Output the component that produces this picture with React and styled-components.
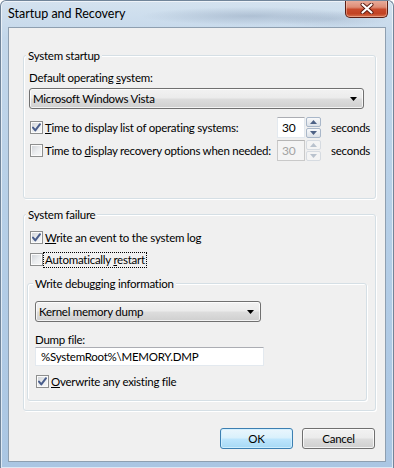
import React from "react";
import styled, { createGlobalStyle } from "styled-components";

const GlobalStyle = createGlobalStyle`
  * { box-sizing: border-box; }
  html, body { margin: 0; padding: 0; background: #fff; }
  body {
    font-family: Lato, "Liberation Sans", sans-serif;
    font-size: 11.5px;
    letter-spacing: -0.25px;
    color: #000;
  }
  #root { width: 394px; height: 468px; }
`;

const CheckMark = () => (
  <svg width="11" height="11" viewBox="0 0 11 11">
    <path d="M2 5.6 L4.3 8.4 L9 2.2" fill="none" stroke="#4a5e8c" strokeWidth="2" strokeLinecap="round" strokeLinejoin="round" />
  </svg>
);

const Arrow = () => (
  <svg width="7" height="4" viewBox="0 0 7 4">
    <path d="M0 0 H7 L3.5 4 Z" fill="#000" />
  </svg>
);

const SpinArrow = ({ up, disabled }) => (
  <svg width="7" height="4" viewBox="0 0 7 4">
    <path d={up ? "M0 4 H7 L3.5 0 Z" : "M0 0 H7 L3.5 4 Z"} fill={disabled ? "#b9c2cd" : "#4d6185"} />
  </svg>
);

const CloseGlyph = () => (
  <svg width="14" height="11" viewBox="0 0 14 11">
    <path d="M2.5 1.5 L11.5 9.5 M11.5 1.5 L2.5 9.5" stroke="#5a1a10" strokeWidth="4" strokeLinecap="round" />
    <path d="M2.5 1.5 L11.5 9.5 M11.5 1.5 L2.5 9.5" stroke="#fff" strokeWidth="2.2" strokeLinecap="round" />
  </svg>
);

const Checkbox = ({ checked, children }) => (
  <CheckRow>
    <Box>{checked && <CheckMark />}</Box>
    <CheckText>{children}</CheckText>
  </CheckRow>
);

const Spinner = ({ value, disabled }) => (
  <SpinWrap>
    <SpinField disabled={disabled}>{value}</SpinField>
    <SpinButtons>
      <SpinButton disabled={disabled}>
        <SpinArrow up disabled={disabled} />
      </SpinButton>
      <SpinButton disabled={disabled}>
        <SpinArrow disabled={disabled} />
      </SpinButton>
    </SpinButtons>
  </SpinWrap>
);

const App = () => {
  return (
    <>
      <GlobalStyle />
      <Window>
        <TitleBar>
          <Title>Startup and Recovery</Title>
          <CloseButton>
            <CloseGlyph />
          </CloseButton>
        </TitleBar>
        <Client>
          <Group pb={37}>
            <Legend>System startup</Legend>
            <Label>
              Default operating <Key>s</Key>ystem:
            </Label>
            <Combo width={335} mt={3}>
              <span>Microsoft Windows Vista</span>
              <Arrow />
            </Combo>
            <TimeRow mt={8}>
              <Checkbox checked>
                <Key>T</Key>ime to display list of operating systems:
              </Checkbox>
              <Spinner value="30" />
              <Unit>seconds</Unit>
            </TimeRow>
            <TimeRow mt={2}>
              <Checkbox>
                Time to <Key>d</Key>isplay recovery options when needed:
              </Checkbox>
              <Spinner value="30" disabled />
              <Unit>seconds</Unit>
            </TimeRow>
          </Group>

          <Group pb={9} mt={8} pt={6}>
            <Legend>System failure</Legend>
            <Checkbox checked>
              <Key>W</Key>rite an event to the system log
            </Checkbox>
            <Spacer h={4} />
            <Checkbox>
              <FocusText>
                Automatically <Key>r</Key>estart
              </FocusText>
            </Checkbox>
            <InnerGroup>
              <Legend inner>Write debugging information</Legend>
              <Combo width={226}>
                <span>Kernel memory dump</span>
                <Arrow />
              </Combo>
              <SmallLabel>Dump file:</SmallLabel>
              <TextInput>%SystemRoot%\MEMORY.DMP</TextInput>
              <Spacer h={6} />
              <Checkbox checked>
                <Key>O</Key>verwrite any existing file
              </Checkbox>
            </InnerGroup>
          </Group>

          <ButtonRow>
            <Button primary>OK</Button>
            <Button>Cancel</Button>
          </ButtonRow>
        </Client>
      </Window>
    </>
  );
};

export default App;

const Window = styled.div`
  width: 394px;
  height: 468px;
  display: flex;
  flex-direction: column;
  border: 1px solid #71859a;
  border-bottom: none;
  border-radius: 6px 6px 0 0;
  overflow: hidden;
  background: linear-gradient(180deg, #d4e2ef 0%, #c3d7ea 8%, #b6cfe7 45%, #aac6e3 100%);
  box-shadow: inset 0 0 0 1px rgba(255, 255, 255, 0.6);
`;

const TitleBar = styled.div`
  height: 26px;
  flex: none;
  display: flex;
  align-items: flex-start;
  padding-left: 7px;
  background:
    radial-gradient(ellipse 110px 9px at 250px 15px, rgba(95, 115, 145, 0.28), transparent),
    radial-gradient(ellipse 60px 8px at 330px 18px, rgba(95, 115, 145, 0.18), transparent);
`;

const Title = styled.div`
  margin-top: 5px;
  line-height: 16px;
  font-size: 12.5px;
  letter-spacing: 0;
  color: #000;
`;

const CloseButton = styled.button`
  margin: -1px 5px 0 auto;
  width: 43px;
  height: 18px;
  padding: 0;
  border: 1px solid #5b1e14;
  border-top: none;
  border-radius: 0 0 5px 5px;
  display: flex;
  align-items: center;
  justify-content: center;
  background: linear-gradient(180deg, #e9b0a0 0%, #de8d76 42%, #c84a2c 55%, #c24323 80%, #d6714f 100%);
  box-shadow: inset 0 0 0 1px rgba(255, 215, 195, 0.45);
`;

const Client = styled.div`
  flex: 1;
  margin: 0 7px 6px;
  border: 1px solid #8e9fb0;
  background: #f0f0f0;
  padding: 20px 9px 12px 14px;
  display: flex;
  flex-direction: column;
`;

const Group = styled.fieldset`
  margin: ${(p) => p.mt || 0}px 0 0;
  padding: ${(p) => (p.pt != null ? p.pt : 7)}px 5px ${(p) => p.pb}px;
  min-width: 0;
  border: 1px solid #d5dfe5;
  border-radius: 3px;
  box-shadow: inset 1px 1px 0 #fff, 1px 1px 0 #fff;
  display: flex;
  flex-direction: column;
  align-items: flex-start;
`;

const InnerGroup = styled(Group)`
  margin: 8px 0 0 -2px;
  width: 340px;
  padding: 10px 7px 10px;
`;

const Legend = styled.legend`
  padding: 0 2px;
  margin-left: ${(p) => (p.inner ? -2 : -3)}px;
  line-height: 15px;
  background: #f0f0f0;
`;

const Label = styled.div`
  line-height: 15px;
`;

const SmallLabel = styled.div`
  margin-top: 11px;
  line-height: 14px;
`;

const Key = styled.span`
  text-decoration: underline;
  text-underline-offset: 1px;
`;

const Combo = styled.div`
  width: ${(p) => p.width}px;
  height: 21px;
  margin-top: ${(p) => p.mt || 0}px;
  border: 1px solid #707070;
  border-radius: 3px;
  display: flex;
  align-items: center;
  justify-content: space-between;
  padding: 0 6px 0 3px;
  line-height: 15px;
  background: linear-gradient(180deg, #f2f2f2 0%, #ebebeb 48%, #dddddd 52%, #cfcfcf 100%);
  box-shadow: inset 0 0 0 1px rgba(255, 255, 255, 0.75);
`;

const TimeRow = styled.div`
  width: 100%;
  height: 21px;
  margin-top: ${(p) => p.mt}px;
  display: flex;
  align-items: center;
  & > :first-child {
    flex: 1;
    min-width: 0;
  }
`;

const CheckRow = styled.div`
  height: 18px;
  display: flex;
  align-items: center;
  padding-left: 1px;
  white-space: nowrap;
`;

const Box = styled.span`
  width: 13px;
  height: 13px;
  flex: none;
  border: 1px solid #8e8f8f;
  background: linear-gradient(135deg, #cdd0d5 0%, #eceef0 55%, #f8f8f8 100%);
  box-shadow: inset 0 0 0 1px #fbfbfb;
  display: flex;
  align-items: center;
  justify-content: center;
`;

const CheckText = styled.span`
  margin-left: 2px;
  line-height: 15px;
`;

const FocusText = styled.span`
  display: inline-block;
  line-height: 14px;
  padding: 0 1px;
  margin-left: -1px;
  outline: 1px dotted #000;
`;

const SpinWrap = styled.div`
  flex: none;
  width: 44px;
  height: 21px;
  display: flex;
`;

const SpinField = styled.div`
  width: 28px;
  height: 21px;
  border: 1px solid ${(p) => (p.disabled ? "#c9c9c9" : "#e3e9ef")};
  border-top-color: ${(p) => (p.disabled ? "#b6b6b6" : "#abadb3")};
  background: ${(p) => (p.disabled ? "#f4f4f4" : "#fff")};
  color: ${(p) => (p.disabled ? "#a3a3a3" : "#000")};
  padding-left: 4px;
  line-height: 19px;
  font-size: 12px;
`;

const SpinButtons = styled.div`
  width: 16px;
  height: 21px;
  display: flex;
  flex-direction: column;
  gap: 1px;
  padding: 0 0 0 1px;
`;

const SpinButton = styled.div`
  flex: 1;
  border: 1px solid ${(p) => (p.disabled ? "#d6dbe1" : "#a9b7c9")};
  border-radius: 2px;
  background: ${(p) =>
    p.disabled
      ? "#f4f4f4"
      : "linear-gradient(180deg, #f8f9fb 0%, #eaedf1 50%, #dde2e8 100%)"};
  display: flex;
  align-items: center;
  justify-content: center;
`;

const Unit = styled.span`
  flex: none;
  width: 39px;
  margin-left: 10px;
  line-height: 15px;
  white-space: nowrap;
`;

const Spacer = styled.div`
  height: ${(p) => p.h}px;
  flex: none;
`;

const TextInput = styled.div`
  width: 229px;
  height: 19px;
  border: 1px solid #e3e9ef;
  border-top-color: #abadb3;
  background: #fff;
  padding-left: 5px;
  line-height: 17px;
  white-space: nowrap;
`;

const ButtonRow = styled.div`
  margin-top: auto;
  display: flex;
  justify-content: flex-end;
  gap: 9px;
  padding-right: 1px;
`;

const Button = styled.button`
  width: 73px;
  height: 21px;
  padding: 0;
  font-family: inherit;
  font-size: 11.5px;
  letter-spacing: inherit;
  color: #000;
  border-radius: 3px;
  border: 1px solid ${(p) => (p.primary ? "#3c7fb1" : "#707070")};
  background: ${(p) =>
    p.primary
      ? "linear-gradient(180deg, #eaf6fd 0%, #d9f0fc 48%, #bee6fd 52%, #a7d9f5 100%)"
      : "linear-gradient(180deg, #f2f2f2 0%, #ebebeb 48%, #dddddd 52%, #cfcfcf 100%)"};
  box-shadow: inset 0 0 0 1px ${(p) => (p.primary ? "rgba(210, 240, 255, 0.9)" : "rgba(255, 255, 255, 0.75)")};
`;
